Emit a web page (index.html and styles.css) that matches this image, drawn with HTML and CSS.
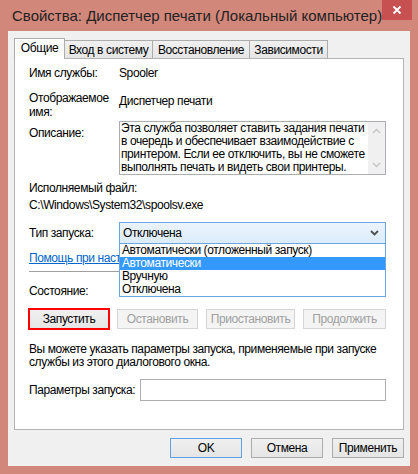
FILE: index.html
```html
<!DOCTYPE html>
<html lang="ru">
<head>
<meta charset="utf-8">
<title>Свойства: Диспетчер печати</title>
<link rel="stylesheet" href="styles.css">
</head>
<body>
<div class="window">
  <div class="titlebar">
    <span class="title">Свойства: Диспетчер печати (Локальный компьютер)</span>
    <div class="close"><svg width="10" height="10" viewBox="0 0 10 10"><path d="M1.5 1.5 L8.5 8.5 M8.5 1.5 L1.5 8.5" stroke="#fff" stroke-width="1.8"/></svg></div>
  </div>
  <div class="client">
    <div class="tabs">
      <div class="tab active t1">Общие</div>
      <div class="tab t2">Вход в систему</div>
      <div class="tab t3">Восстановление</div>
      <div class="tab t4">Зависимости</div>
    </div>
    <div class="panel">
      <div class="row r1"><span class="lbl">Имя службы:</span><span class="val">Spooler</span></div>
      <div class="row r2"><span class="lbl two">Отображаемое<br>имя:</span><span class="val v2">Диспетчер печати</span></div>
      <div class="row r3">
        <span class="lbl l3">Описание:</span>
        <div class="memo">
          <div class="memo-text">Эта служба позволяет ставить задания печати<br>в очередь и обеспечивает взаимодействие с<br>принтером. Если ее отключить, вы не сможете<br>выполнять печать и видеть свои принтеры.</div>
          <div class="vscroll">
            <svg width="9" height="6" viewBox="0 0 9 6"><path d="M1 5 L4.5 1.5 L8 5" fill="none" stroke="#c4c4c4" stroke-width="1.4"/></svg>
            <svg width="9" height="6" viewBox="0 0 9 6"><path d="M1 1 L4.5 4.5 L8 1" fill="none" stroke="#c4c4c4" stroke-width="1.4"/></svg>
          </div>
        </div>
      </div>
      <div class="line r4">Исполняемый файл:</div>
      <div class="line r5">C:\Windows\System32\spoolsv.exe</div>
      <div class="row r6">
        <span class="lbl l6">Тип запуска:</span>
        <div class="combo">
          <div class="combo-box">
            <span class="combo-text">Отключена</span>
            <svg class="chev" width="9" height="6" viewBox="0 0 9 6"><path d="M1 1 L4.5 4.5 L8 1" fill="none" stroke="#505050" stroke-width="1.8"/></svg>
          </div>
          <ul class="droplist">
            <li>Автоматически (отложенный запуск)</li>
            <li class="sel">Автоматически</li>
            <li>Вручную</li>
            <li>Отключена</li>
          </ul>
        </div>
      </div>
      <div class="line r7"><a class="link">Помощь при настройке параметров запуска служб.</a></div>
      <div class="sep"></div>
      <div class="line r8">Состояние:</div>
      <div class="btnrow">
        <div class="btn b-start marked">Запустить</div>
        <div class="btn disabled b-stop">Остановить</div>
        <div class="btn disabled b-pause">Приостановить</div>
        <div class="btn disabled b-cont">Продолжить</div>
      </div>
      <div class="note">Вы можете указать параметры запуска, применяемые при запуске<br>службы из этого диалогового окна.</div>
      <div class="row r9">
        <span class="lbl l9">Параметры запуска:</span>
        <div class="input"></div>
      </div>
    </div>
    <div class="footer">
      <div class="btn fbtn default">OK</div>
      <div class="btn fbtn">Отмена</div>
      <div class="btn fbtn">Применить</div>
    </div>
  </div>
</div>
</body>
</html>
```
FILE: styles.css
```css
html, body {
  margin: 0;
  padding: 0;
}
body {
  font-family: "Liberation Sans", "Noto Sans", sans-serif;
  font-size: 12px;
  color: #000;
}
.window {
  width: 418px;
  height: 474px;
  box-sizing: border-box;
  background: #d2877b;
  padding: 0 8px 8px 8px;
  display: flex;
  flex-direction: column;
}
.titlebar {
  height: 31px;
  flex: none;
  display: flex;
  align-items: flex-start;
}
.title {
  font-size: 15px;
  line-height: 20px;
  padding-top: 6px;
  margin-left: 4px;
  color: #222;
  white-space: nowrap;
}
.close {
  margin-left: auto;
  margin-right: -2px;
  width: 31px;
  height: 20px;
  background: #c75050;
  display: flex;
  align-items: center;
  justify-content: center;
}
.client {
  flex: 1;
  background: #f0f0f0;
  padding: 7px 6px 0 6px;
  letter-spacing: -0.4px;
}
.tabs {
  display: flex;
  align-items: flex-end;
  height: 20px;
}
.tab {
  box-sizing: border-box;
  height: 18px;
  border: 1px solid #acacac;
  border-bottom: none;
  background: linear-gradient(#f0f0f0, #e5e5e5);
  padding-top: 1px;
  line-height: 16px;
  text-align: center;
  white-space: nowrap;
  margin-left: -1px;
}
.tab.active {
  height: 21px;
  margin-bottom: -1px;
  margin-left: 0;
  background: #fff;
  position: relative;
  z-index: 1;
}
.t1 { width: 51px; }
.t2 { width: 89px; }
.t3 { width: 98px; }
.t4 { width: 79px; }
.panel {
  height: 372px;
  box-sizing: border-box;
  border: 1px solid #b4b4b4;
  background: #fff;
  padding: 6px 17px 0 14px;
}
.row {
  display: flex;
  align-items: flex-start;
  line-height: 16px;
}
.lbl {
  width: 90px;
  flex: none;
  white-space: nowrap;
}
.line {
  line-height: 16px;
  white-space: nowrap;
}
.r2 { margin-top: 10px; }
.lbl.two { line-height: 14px; }
.v2 { padding-top: 2px; }
.r3 { margin-top: 2px; }
.l3 { padding-top: 4px; }
.memo {
  flex: 1;
  height: 54px;
  box-sizing: border-box;
  border: 1px solid #abadb3;
  display: flex;
  overflow: hidden;
}
.memo-text {
  flex: 1;
  line-height: 13px;
  padding: 0 0 0 1px;
  white-space: nowrap;
  overflow: hidden;
}
.vscroll {
  width: 17px;
  flex: none;
  background: #f0f0f0;
  display: flex;
  flex-direction: column;
  align-items: center;
  justify-content: space-between;
  padding: 6px 0 6px;
  box-sizing: border-box;
}
.r4 { margin-top: 5px; }
.r5 { margin-top: 1px; }
.r6 { margin-top: 9px; }
.l6 { padding-top: 3px; }
.combo {
  flex: 1;
  position: relative;
}
.combo-box {
  height: 22px;
  box-sizing: border-box;
  border: 1px solid #6aa6e4;
  background: linear-gradient(#ecf4fc, #dcecfc);
  display: flex;
  align-items: center;
  padding: 0 6px 0 3px;
}
.combo-text {
  flex: 1;
  line-height: 20px;
}
.droplist {
  position: absolute;
  top: 100%;
  left: 0;
  right: 0;
  z-index: 2;
  margin: 0;
  padding: 0;
  list-style: none;
  background: #fff;
  border: 1px solid #6aa6e4;
  border-top: none;
}
.droplist li {
  height: 13px;
  line-height: 13px;
  padding-left: 2px;
  white-space: nowrap;
}
.droplist li.sel {
  background: #3399ff;
  color: #fff;
}
.r7 {
  margin-top: 6px;
  width: 90px;
  overflow: hidden;
}
.link {
  color: #0066cc;
  text-decoration: underline;
}
.sep {
  margin-top: 5px;
  height: 1px;
  background: #a0a0a0;
}
.r8 { margin-top: 11px; }
.btnrow {
  margin-top: 10px;
  display: flex;
  justify-content: space-between;
}
.btn {
  height: 20px;
  box-sizing: border-box;
  border: 1px solid #acacac;
  background: linear-gradient(#f0f0f0, #e5e5e5);
  display: flex;
  align-items: center;
  justify-content: center;
  line-height: 16px;
  white-space: nowrap;
}
.btn.disabled {
  background: #f4f4f4;
  border-color: #d5d5d5;
  color: #a0a0a0;
}
.marked {
  outline: 2px solid #ff0000;
  outline-offset: -1px;
}
.b-start { width: 80px; }
.b-stop { width: 81px; }
.b-pause { width: 89px; }
.b-cont { width: 83px; }
.note {
  margin-top: 14px;
  line-height: 13px;
  white-space: nowrap;
}
.r9 { margin-top: 10px; }
.l9 { width: 111px; padding-top: 3px; }
.input {
  flex: 1;
  height: 22px;
  box-sizing: border-box;
  border: 1px solid #abadb3;
  background: #fff;
}
.footer {
  margin-top: 8px;
  display: flex;
  justify-content: flex-end;
  gap: 9px;
}
.fbtn { width: 72px; }
.btn.default { border-color: #5fa2e8; }
```
